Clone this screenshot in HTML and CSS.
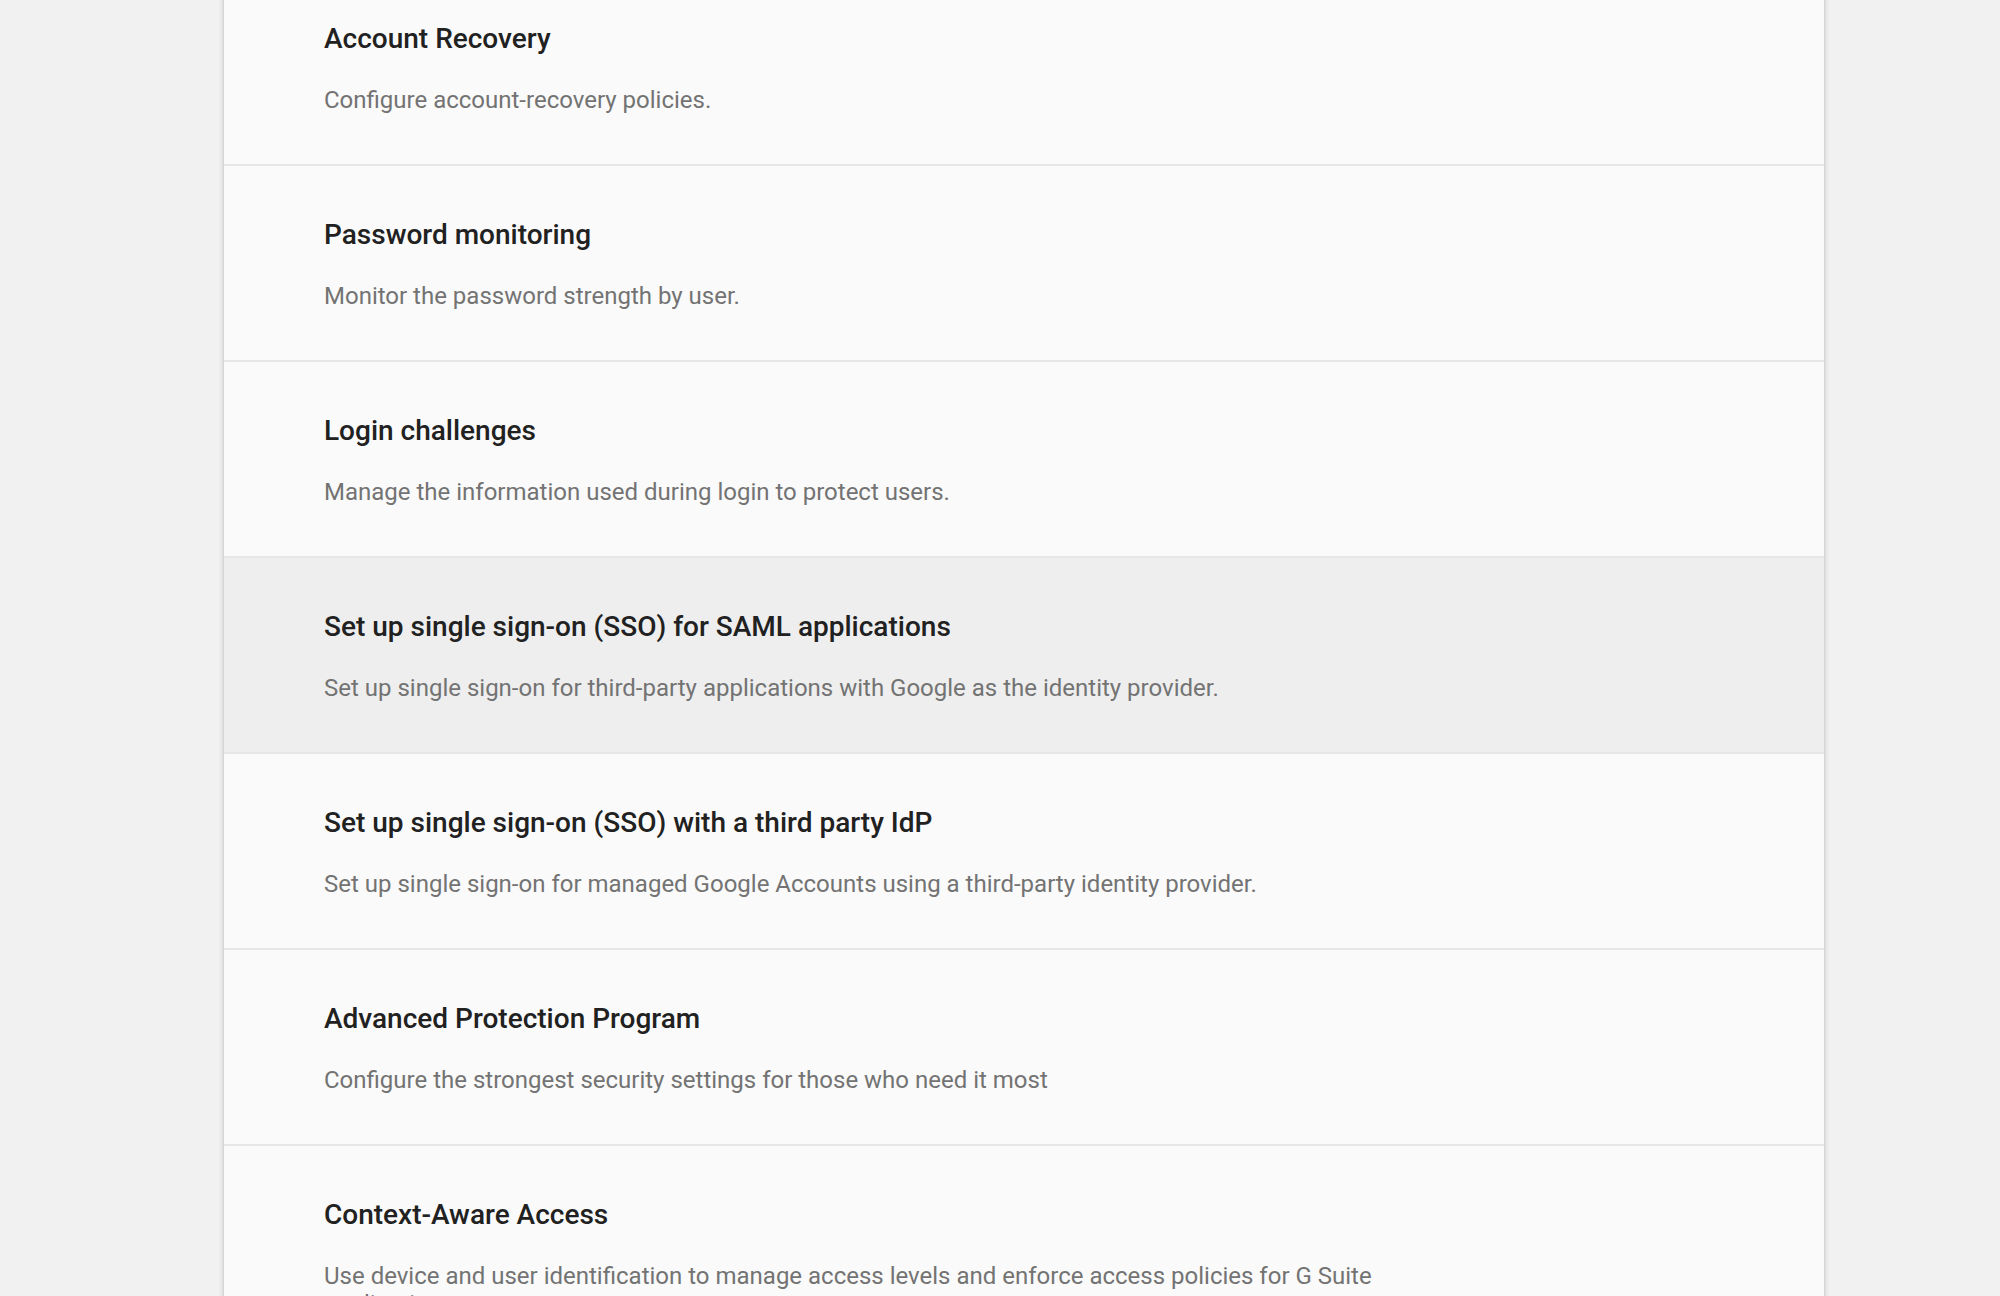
FILE: index.html
```html
<!DOCTYPE html>
<html lang="en">
<head>
<meta charset="utf-8">
<title>Security settings</title>
<link rel="stylesheet" href="styles.css">
</head>
<body>
<main class="page">
  <section class="card">
    <div class="row">
      <div class="row-title">Account Recovery</div>
      <div class="row-desc">Configure account-recovery policies.</div>
    </div>
    <div class="row">
      <div class="row-title">Password monitoring</div>
      <div class="row-desc">Monitor the password strength by user.</div>
    </div>
    <div class="row">
      <div class="row-title">Login challenges</div>
      <div class="row-desc">Manage the information used during login to protect users.</div>
    </div>
    <div class="row row-hover">
      <div class="row-title">Set up single sign-on (SSO) for SAML applications</div>
      <div class="row-desc">Set up single sign-on for third-party applications with Google as the identity provider.</div>
    </div>
    <div class="row">
      <div class="row-title">Set up single sign-on (SSO) with a third party IdP</div>
      <div class="row-desc">Set up single sign-on for managed Google Accounts using a third-party identity provider.</div>
    </div>
    <div class="row">
      <div class="row-title">Advanced Protection Program</div>
      <div class="row-desc">Configure the strongest security settings for those who need it most</div>
    </div>
    <div class="row">
      <div class="row-title">Context-Aware Access</div>
      <div class="row-desc">Use device and user identification to manage access levels and enforce access policies for G Suite applications.</div>
    </div>
  </section>
</main>
</body>
</html>
```

FILE: styles.css
```css
html, body {
  margin: 0;
  padding: 0;
  background: #f1f1f1;
  font-family: Roboto, "Noto Sans", "Liberation Sans", sans-serif;
  overflow: hidden;
}

.page {
  width: 1600px;
  margin-left: 224px;
}

.card {
  background: #fafafa;
  box-shadow: 0 0 6px rgba(0, 0, 0, 0.18), 0 2px 4px rgba(0, 0, 0, 0.08);
  margin-top: -30px;
}

.row {
  box-sizing: border-box;
  height: 196px;
  padding: 53px 100px 0;
  border-bottom: 2px solid #e6e6e6;
  display: flex;
  flex-direction: column;
}

.row-hover {
  background: #eeeeee;
}

.row-title {
  font-size: 28px;
  font-weight: 500;
  color: #212121;
  line-height: 32px;
}

.row-desc {
  margin-top: 31px;
  font-size: 24px;
  font-weight: 400;
  color: #737373;
  line-height: 28px;
  max-width: 1060px;
}
```
